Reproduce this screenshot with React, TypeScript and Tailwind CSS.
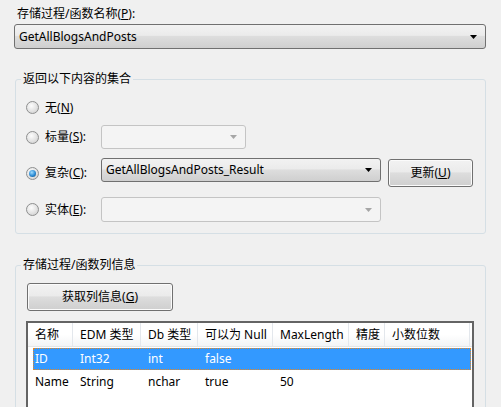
import React from 'react';

const font = { fontFamily: '"Noto Sans", "Noto Sans CJK SC", sans-serif' };

function Radio({ checked }: { checked?: boolean }) {
  return (
    <div className="flex h-[13px] w-[13px] items-center justify-center rounded-full border border-[#8e8f8f] bg-[radial-gradient(circle_at_40%_35%,#fdfdfd_0%,#e2e2e2_55%,#c8c8c8_100%)]">
      {checked && (
        <div className="h-[7px] w-[7px] rounded-full bg-[radial-gradient(circle_at_40%_35%,#9fdcff_0%,#2a8ad4_55%,#13466e_100%)]" />
      )}
    </div>
  );
}

function Arrow({ disabled }: { disabled?: boolean }) {
  return (
    <svg width="7" height="4" viewBox="0 0 7 4" className="shrink-0">
      <path d="M0 0h7L3.5 4z" fill={disabled ? '#a6a6a6' : '#000000'} />
    </svg>
  );
}

function Combo({ text, disabled, className }: { text?: string; disabled?: boolean; className: string }) {
  return (
    <div
      className={`flex items-center justify-between rounded-[3px] border pl-[4px] pr-[8px] ${
        disabled
          ? 'border-[#c4c4c4] bg-[#f4f4f4]'
          : 'border-[#707070] bg-[linear-gradient(#f2f2f2_0%,#ebebeb_45%,#dddddd_50%,#cfcfcf_100%)]'
      } ${className}`}
    >
      <span className="text-[12px] text-black">{text}</span>
      <Arrow disabled={disabled} />
    </div>
  );
}

function Button({ children, className }: { children: React.ReactNode; className: string }) {
  return (
    <div
      className={`flex items-center justify-center rounded-[3px] border border-[#707070] bg-[linear-gradient(#f2f2f2_0%,#ebebeb_45%,#dddddd_50%,#cfcfcf_100%)] text-[12px] text-black shadow-[inset_0_0_0_1px_#fbfbfb] ${className}`}
    >
      {children}
    </div>
  );
}

function RadioRow({
  label,
  keyChar,
  checked,
  children,
  className,
}: {
  label: string;
  keyChar: string;
  checked?: boolean;
  children?: React.ReactNode;
  className: string;
}) {
  return (
    <div className={`flex items-center ${className}`}>
      <div className="ml-[10px]">
        <Radio checked={checked} />
      </div>
      <span className="ml-[6px] w-[56px] text-[12px] text-black">
        {label}(<u>{keyChar}</u>){children ? ':' : ''}
      </span>
      {children}
    </div>
  );
}

const columns = [
  { name: '名称', w: 'w-[45px]' },
  { name: 'EDM 类型', w: 'w-[68px]' },
  { name: 'Db 类型', w: 'w-[57px]' },
  { name: '可以为 Null', w: 'w-[75px]' },
  { name: 'MaxLength', w: 'w-[76px]' },
  { name: '精度', w: 'w-[36px]' },
  { name: '小数位数', w: 'w-[85px]' },
];

const rows = [
  ['ID', 'Int32', 'int', 'false', '', '', ''],
  ['Name', 'String', 'nchar', 'true', '50', '', ''],
];

export default function App() {
  return (
    <div className="h-[407px] w-[501px] overflow-hidden bg-[#f0f0f0] pl-[14px] pt-[4px] text-black" style={font}>
      <div className="ml-[3px] h-[20px] text-[12px] leading-[20px]">
        存储过程/函数名称(<u>P</u>):
      </div>
      <Combo text="GetAllBlogsAndPosts" className="h-[25px] w-[472px]" />

      <fieldset className="ml-[1px] mt-[22px] w-[471px] rounded-[3px] border border-[#d5dfe5] pb-[11px]">
        <legend className="ml-[5px] px-[2px] text-[12px] leading-[16px]">返回以下内容的集合</legend>
        <RadioRow label="无" keyChar="N" className="mt-[10px] h-[21px]" />
        <RadioRow label="标量" keyChar="S" className="mt-[7px] h-[24px]">
          <Combo disabled className="h-[24px] w-[145px]" />
        </RadioRow>
        <RadioRow label="复杂" keyChar="C" checked className="mt-[9px] h-[30px]">
          <Combo text="GetAllBlogsAndPosts_Result" className="h-[24px] w-[280px] self-start" />
          <Button className="ml-[7px] mt-[1px] h-[28px] w-[85px] self-start">
            <span>
              更新(<u>U</u>)
            </span>
          </Button>
        </RadioRow>
        <RadioRow label="实体" keyChar="E" className="mt-[9px] h-[25px]">
          <Combo disabled className="h-[25px] w-[280px]" />
        </RadioRow>
      </fieldset>

      <fieldset className="ml-[1px] mt-[23px] h-[200px] w-[471px] rounded-[3px] border border-[#d5dfe5]">
        <legend className="ml-[5px] px-[2px] text-[12px] leading-[16px]">存储过程/函数列信息</legend>
        <Button className="ml-[11px] mt-[10px] h-[28px] w-[146px]">
          <span>
            获取列信息(<u>G</u>)
          </span>
        </Button>
        <div className="ml-[10px] mt-[10px] h-[120px] w-[448px] border-2 border-[#646464] bg-white">
          <div className="flex h-[24px] border-b border-[#e5e5e5] bg-[linear-gradient(#ffffff_0%,#ffffff_50%,#f3f4f5_100%)]">
            {columns.map((c) => (
              <div
                key={c.name}
                className={`${c.w} flex shrink-0 items-center border-r border-[#e3e7ec] pl-[7px] text-[12px]`}
              >
                {c.name}
              </div>
            ))}
          </div>
          {/* selected row */}
          <div className="ml-[5px] mr-[1px] mt-[1px] flex h-[22px] items-center border border-dotted border-[#e8861e] bg-[#3399ff] text-[12px] text-white">
            <div className="w-[39px] shrink-0 pl-[1px]">{rows[0][0]}</div>
            {rows[0].slice(1).map((cell, j) => (
              <div key={j} className={`${columns[j + 1].w} shrink-0 pl-[7px]`}>
                {cell}
              </div>
            ))}
          </div>
          <div className="mt-[1px] flex h-[22px] items-center text-[12px]">
            {rows[1].map((cell, j) => (
              <div key={j} className={`${columns[j].w} shrink-0 pl-[7px]`}>
                {cell}
              </div>
            ))}
          </div>
        </div>
      </fieldset>
    </div>
  );
}
